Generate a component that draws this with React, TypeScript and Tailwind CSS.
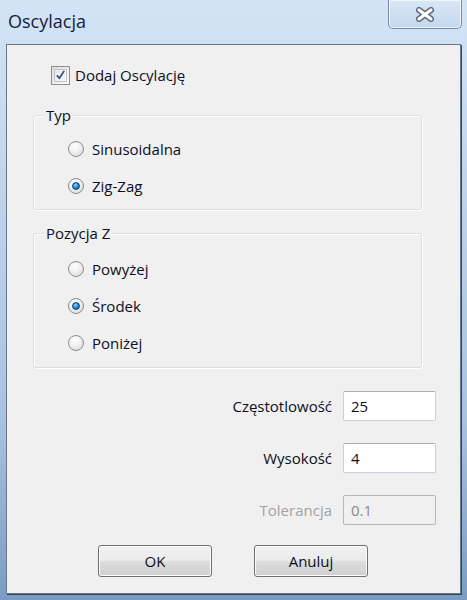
import React from "react";

const font = { fontFamily: '"Open Sans", "Noto Sans", sans-serif' };

function Radio({ checked, label }: { checked?: boolean; label: string }) {
  return (
    <div className="flex items-center h-[20px]">
      <div className="w-[16px] h-[16px] rounded-full border border-[#8e8e8e] bg-[radial-gradient(circle_at_40%_35%,#ffffff_0%,#f0f0f0_45%,#cfcfcf_100%)] flex items-center justify-center shrink-0">
        {checked && (
          <div className="w-[8px] h-[8px] rounded-full bg-[radial-gradient(circle_at_40%_35%,#8fdcff_0%,#1f86cf_50%,#0a4a80_100%)] border border-[#0c4675]" />
        )}
      </div>
      <span className="ml-[8px] text-[15px] text-[#0b0f1e] leading-none">{label}</span>
    </div>
  );
}

function Group({ title, children, h }: { title: string; children: React.ReactNode; h: string }) {
  return (
    <div className={`relative ${h} border border-[#d5dfe5] rounded-[3px] shadow-[inset_1px_1px_0_#ffffff,1px_1px_0_#ffffff]`}>
      <span className="absolute -top-[11px] left-[10px] px-[2px] bg-[#f0f0f0] text-[15px] leading-[20px] text-[#0b0f1e]">
        {title}
      </span>
      {children}
    </div>
  );
}

function Field({ label, value, disabled }: { label: string; value: string; disabled?: boolean }) {
  return (
    <div className="flex items-center justify-end">
      <span className={`text-[15px] ${disabled ? "text-[#a3a3a3]" : "text-[#0b0f1e]"}`}>{label}</span>
      <div
        className={`ml-[11px] w-[93px] h-[30px] rounded-[2px] border flex items-center px-[7px] text-[15px] ${
          disabled
            ? "border-[#b8b8b8] bg-[#f0f0f0] text-[#8a8a8a]"
            : "border-[#c9d2dc] bg-white text-[#0b0f1e] border-t-[#abadb3]"
        }`}
      >
        {value}
      </div>
    </div>
  );
}

function Button({ label }: { label: string }) {
  return (
    <div className="w-[114px] h-[32px] rounded-[3px] border border-[#707070] bg-[linear-gradient(to_bottom,#f2f2f2_0%,#ebebeb_48%,#dddddd_52%,#cfcfcf_100%)] shadow-[inset_0_0_0_1px_#fcfcfc] flex items-center justify-center text-[15px] text-[#0b0f1e]">
      {label}
    </div>
  );
}

export default function App() {
  return (
    <div
      style={font}
      className="w-[467px] h-[600px] flex flex-col bg-[linear-gradient(to_bottom,#d4e4f6_0%,#c6daf0_20%,#a9c2de_70%,#7b9cc2_100%)] overflow-hidden"
    >
      <div className="h-[44px] flex items-start shrink-0">
        <div className="ml-[8px] mt-[8px] text-[18px] text-[#14213d] leading-[26px]">Oscylacja</div>
        <div className="ml-auto mr-[5px] w-[74px] h-[29px] rounded-b-[5px] border border-t-0 border-[#7c8ea3] bg-[linear-gradient(to_bottom,#d9e7f6,#c5d8ee)] shadow-[inset_0_0_0_1px_rgba(255,255,255,0.6)] flex items-center justify-center">
          <svg width="20" height="15" viewBox="0 0 20 15">
            <path d="M4 3 L16 12 M16 3 L4 12" stroke="#5e6878" strokeWidth="6" strokeLinecap="round" fill="none" />
            <path d="M4 3 L16 12 M16 3 L4 12" stroke="#ffffff" strokeWidth="3.2" strokeLinecap="round" fill="none" />
          </svg>
        </div>
      </div>
      <div className="mx-[6px] h-[550px] border border-[#6a7889] bg-[#f0f0f0] flex flex-col pl-[26px] pr-[38px] shrink-0 shadow-[1px_1px_0_#3d4650]">
        <div className="mt-[20px] ml-[18px] flex items-center h-[20px]">
          <div className="w-[19px] h-[19px] border border-[#8e8f8f] bg-[linear-gradient(135deg,#dcdcdc,#ffffff)] p-[2px] shrink-0">
            <div className="w-full h-full border border-[#c4c4c4] bg-[linear-gradient(135deg,#e6e6e6,#fafafa)] flex items-center justify-center">
              <svg width="12" height="12" viewBox="0 0 12 12">
                <path d="M2 6.5 L4.8 9.5 L10 1.5" stroke="#3a4f9a" strokeWidth="2" fill="none" strokeLinejoin="round" />
              </svg>
            </div>
          </div>
          <span className="ml-[5px] text-[15px] text-[#0b0f1e]">Dodaj Oscylację</span>
        </div>

        <div className="mt-[30px]">
          <Group title="Typ" h="h-[95px]">
            <div className="flex flex-col gap-[17px] pl-[34px] pt-[23px]">
              <Radio label="Sinusoidalna" />
              <Radio label="Zig-Zag" checked />
            </div>
          </Group>
        </div>

        <div className="mt-[23px]">
          <Group title="Pozycja Z" h="h-[135px]">
            <div className="flex flex-col gap-[17px] pl-[34px] pt-[25px]">
              <Radio label="Powyżej" />
              <Radio label="Środek" checked />
              <Radio label="Poniżej" />
            </div>
          </Group>
        </div>

        <div className="mt-[23px] flex flex-col gap-[22px] mr-[-14px]">
          <Field label="Częstotlowość" value="25" />
          <Field label="Wysokość" value="4" />
          <Field label="Tolerancja" value="0.1" disabled />
        </div>

        <div className="mt-[20px] flex gap-[42px] pl-[65px]">
          <Button label="OK" />
          <Button label="Anuluj" />
        </div>
      </div>
    </div>
  );
}
